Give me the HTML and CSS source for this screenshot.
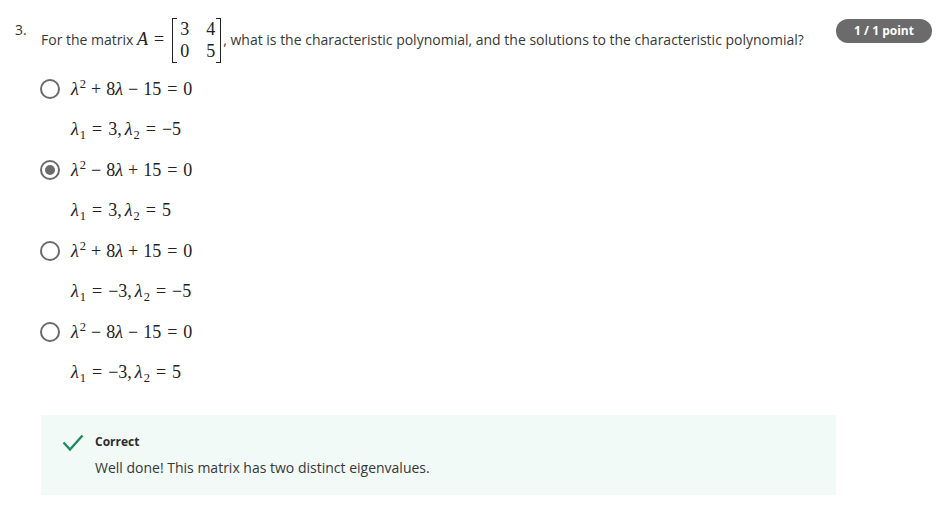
FILE: index.html
```html
<!DOCTYPE html>
<html>
<head>
<meta charset="utf-8">
<link rel="stylesheet" href="styles.css">
</head>
<body>
<div class="question">
  <div class="num">3.</div>
  <div class="content">
    <div class="prompt-row">
      <div class="prompt">
        For the matrix <span class="m"><span class="mi">A</span><span class="mrel">=</span><span class="matrix"><span class="brk brk-l"></span><span class="cells"><span>3</span><span>4</span><span>0</span><span>5</span></span><span class="brk brk-r"></span></span></span>, what is the characteristic polynomial, and the solutions to the characteristic polynomial?
      </div>
      <div class="badge">1 / 1 point</div>
    </div>
    <div class="options">
      <div class="option">
        <div class="line"><span class="radio"></span><span class="m"><span class="mi">λ</span><sup>2</sup><span class="mbin">+</span>8<span class="mi">λ</span><span class="mbin">−</span>15<span class="mrel">=</span>0</span></div>
        <div class="line sol"><span class="m"><span class="mi">λ</span><sub>1</sub><span class="mrel">=</span>3,<span class="thin"></span><span class="mi">λ</span><sub>2</sub><span class="mrel">=</span>−5</span></div>
      </div>
      <div class="option">
        <div class="line"><span class="radio checked"></span><span class="m"><span class="mi">λ</span><sup>2</sup><span class="mbin">−</span>8<span class="mi">λ</span><span class="mbin">+</span>15<span class="mrel">=</span>0</span></div>
        <div class="line sol"><span class="m"><span class="mi">λ</span><sub>1</sub><span class="mrel">=</span>3,<span class="thin"></span><span class="mi">λ</span><sub>2</sub><span class="mrel">=</span>5</span></div>
      </div>
      <div class="option">
        <div class="line"><span class="radio"></span><span class="m"><span class="mi">λ</span><sup>2</sup><span class="mbin">+</span>8<span class="mi">λ</span><span class="mbin">+</span>15<span class="mrel">=</span>0</span></div>
        <div class="line sol"><span class="m"><span class="mi">λ</span><sub>1</sub><span class="mrel">=</span>−3,<span class="thin"></span><span class="mi">λ</span><sub>2</sub><span class="mrel">=</span>−5</span></div>
      </div>
      <div class="option">
        <div class="line"><span class="radio"></span><span class="m"><span class="mi">λ</span><sup>2</sup><span class="mbin">−</span>8<span class="mi">λ</span><span class="mbin">−</span>15<span class="mrel">=</span>0</span></div>
        <div class="line sol"><span class="m"><span class="mi">λ</span><sub>1</sub><span class="mrel">=</span>−3,<span class="thin"></span><span class="mi">λ</span><sub>2</sub><span class="mrel">=</span>5</span></div>
      </div>
    </div>
    <div class="feedback">
      <svg class="check" width="22" height="18" viewBox="0 0 22 18"><path d="M1.5 8.5 L8 15.5 L20.5 1.5" fill="none" stroke="#1f8a5b" stroke-width="2.4"/></svg>
      <div class="fb-text">
        <div class="fb-title">Correct</div>
        <div class="fb-msg">Well done! This matrix has two distinct eigenvalues.</div>
      </div>
    </div>
  </div>
</div>
</body>
</html>
```

FILE: styles.css
```css
* { box-sizing: border-box; }
body {
  margin: 0;
  background: #fff;
  font-family: "Open Sans", "Liberation Sans", sans-serif;
  color: #373737;
  font-size: 14px;
}
.question {
  display: flex;
  padding: 17px 17px 0 15px;
}
.num {
  width: 26px;
  line-height: 20px;
  padding-top: 3px;
  font-size: 14px;
}
.content { flex: 1; }
.prompt-row {
  display: flex;
  align-items: flex-start;
  justify-content: space-between;
}
.prompt {
  line-height: 20px;
  padding-top: 1px;
}
.badge {
  margin-top: 2px;
  width: 96px;
  height: 24px;
  border-radius: 12px;
  background: #6b6b6b;
  color: #fff;
  font-weight: 700;
  font-size: 12px;
  line-height: 24px;
  text-align: center;
}
.m {
  font-family: "Liberation Serif", "DejaVu Serif", serif;
  font-size: 18px;
  color: #222;
  white-space: nowrap;
}
.mi { font-style: italic; }
.mbin { margin: 0 5px; }
.mrel { margin: 0 6px; }
.thin { display: inline-block; width: 3px; }
sup { font-size: 12.5px; vertical-align: 7px; line-height: 0; margin-left: 1px; }
sub { font-size: 12.5px; vertical-align: -4px; line-height: 0; margin-left: 1px; }
.matrix {
  display: inline-flex;
  align-items: stretch;
  vertical-align: middle;
  height: 45px;
  margin-left: 2px;
  margin-right: 2px;
}
.brk {
  width: 5px;
  border-top: 1px solid #222;
  border-bottom: 1px solid #222;
}
.brk-l { border-left: 1px solid #222; }
.brk-r { border-right: 1px solid #222; }
.cells {
  display: grid;
  grid-template-columns: auto auto;
  column-gap: 17px;
  padding: 2px 1px 0 3px;
  line-height: 19px;
}
.options {
  margin-top: 6px;
  display: flex;
  flex-direction: column;
}
.line {
  height: 40.5px;
  display: flex;
  align-items: center;
}
.sol { padding-left: 30px; }
.radio {
  width: 20px;
  height: 20px;
  margin-left: -1px;
  margin-right: 11px;
  border: 2px solid #6b6b6b;
  border-radius: 50%;
  display: flex;
  align-items: center;
  justify-content: center;
}
.radio.checked::after {
  content: "";
  width: 10px;
  height: 10px;
  border-radius: 50%;
  background: #6b6b6b;
}
.feedback {
  margin-top: 22px;
  width: 795px;
  height: 80px;
  background: #f1faf7;
  display: flex;
  align-items: flex-start;
  padding: 18px 0 0 21px;
}
.check { margin-top: 1px; margin-right: 11px; }
.fb-title {
  font-weight: 700;
  font-size: 12px;
  color: #2b2b2b;
  line-height: 18px;
}
.fb-msg {
  margin-top: 8px;
  font-size: 14px;
  line-height: 18px;
}
```
